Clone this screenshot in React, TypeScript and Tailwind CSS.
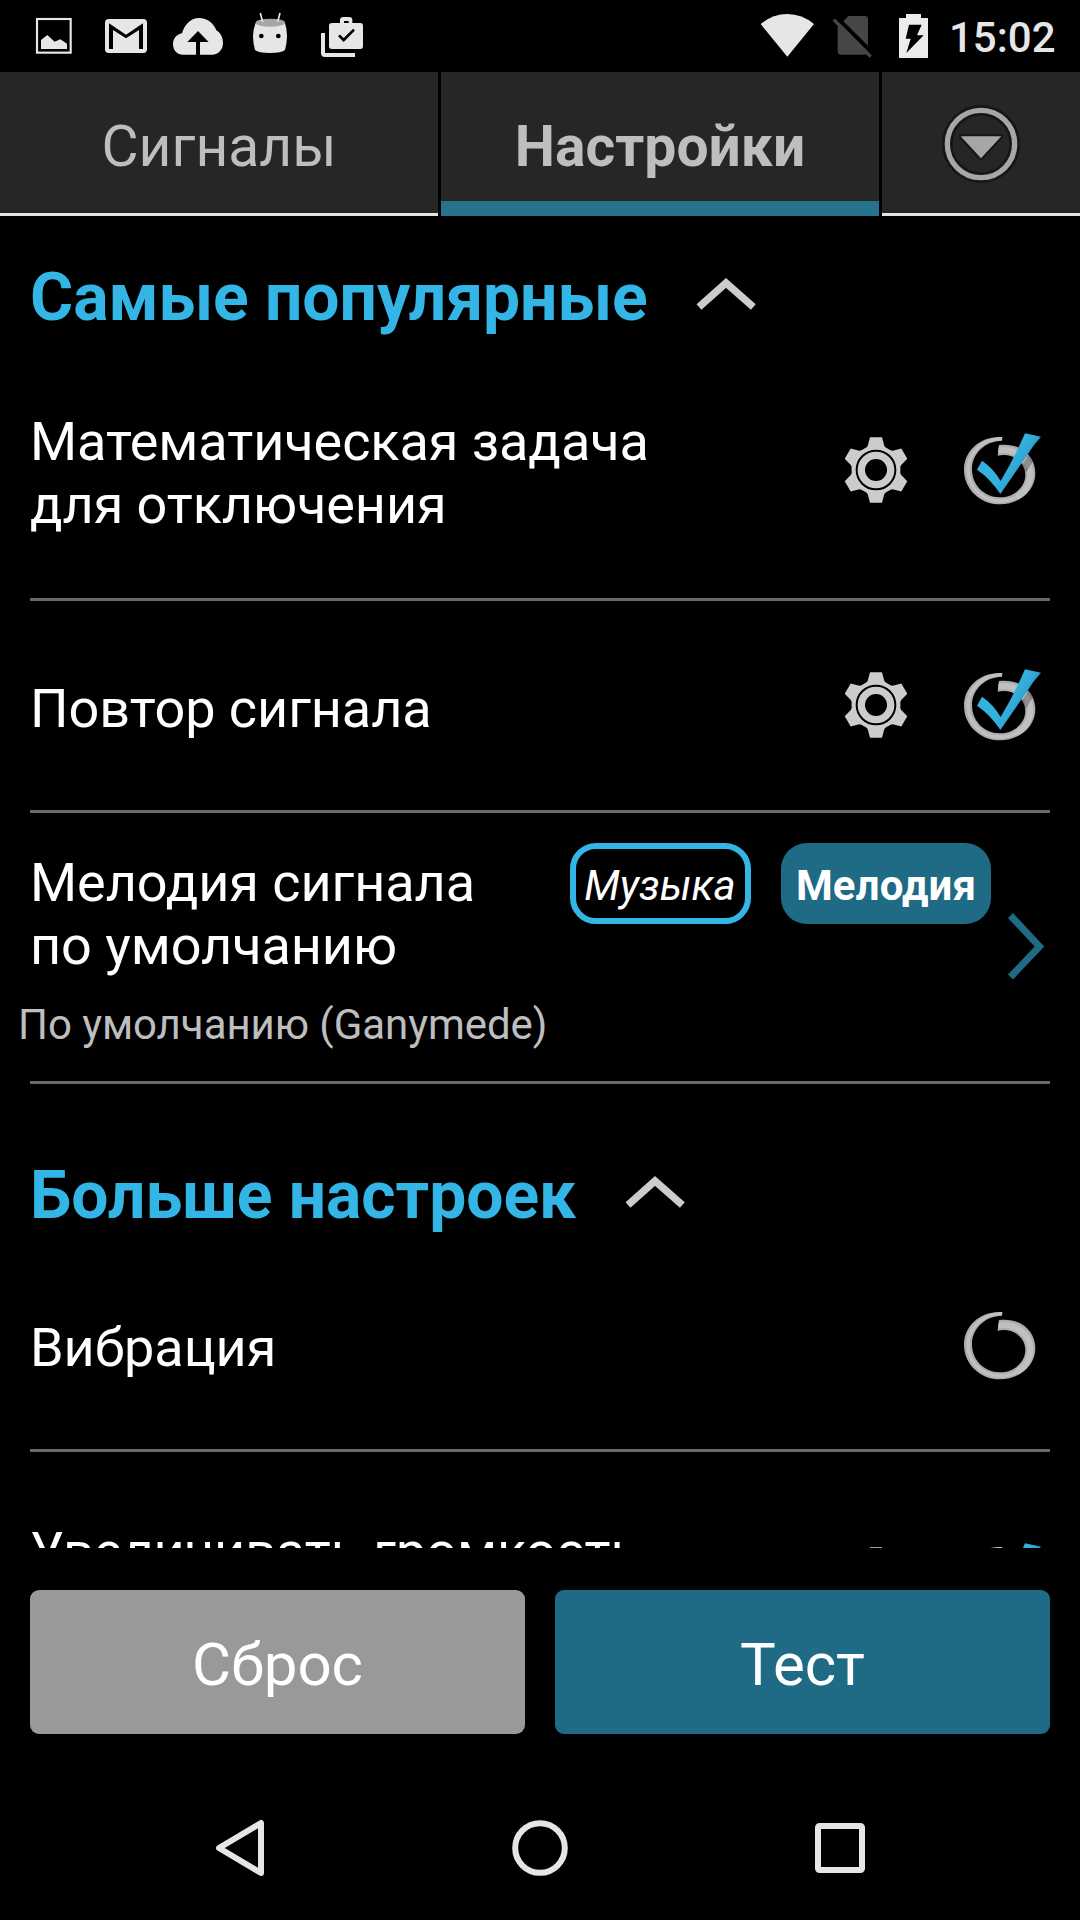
import type { ReactNode } from 'react'

function StatusBar() {
  return (
    <div className="flex h-[72px] shrink-0 items-start pl-[18px] text-[#e6e6e6]">
      {/* Screenshot */}
      <svg className="h-[72px] w-[72px]" viewBox="54 0 216 216" fill="currentColor">
        <rect x="111" y="57" width="101" height="101" fill="none" stroke="currentColor" strokeWidth="6.5" />
        <path d="M123 147V120L142 105L164 125L181 118L201 131V147Z" />
      </svg>
      {/* Mail */}
      <svg className="h-[72px] w-[72px]" viewBox="270 0 216 216">
        <rect x="315" y="57" width="126" height="102" rx="11" fill="currentColor" />
        <path d="M327 147V70L378 104L429 70V147H417V90L378 115L339 90V147Z" fill="#000" />
      </svg>
      {/* Cloud upload */}
      <svg className="h-[72px] w-[72px]" viewBox="486 0 216 216">
        <path
          d="M546 164C531 164 519 150 519 133C519 116 529 104 546 100C554 72 573 54 597 54C622 54 641 70 649 91C662 98 669 113 669 129C669 149 655 164 637 164Z"
          fill="currentColor"
        />
        <path d="M594 93L626 126H600V166H588V126H562Z" fill="#000" />
      </svg>
      {/* Android head */}
      <svg className="h-[72px] w-[72px]" viewBox="702 0 216 216">
        <path d="M767 69Q810 50 855 69Q861 88 861 108Q861 130 855 150Q845 159 810 159Q775 159 765 150Q759 130 759 108Q759 88 767 69Z" fill="currentColor" />
        <ellipse cx="811" cy="68" rx="44" ry="12" fill="#a6a6a6" />
        <path d="M781 39L788 66M840 39L833 66" stroke="currentColor" strokeWidth="5" />
        <circle cx="784" cy="108" r="7" fill="#000" />
        <circle cx="835" cy="108" r="7" fill="#000" />
      </svg>
      {/* Work profile */}
      <svg className="h-[72px] w-[72px]" viewBox="918 0 216 216">
        <path d="M969 99V159Q969 165 975 165H1065" fill="none" stroke="currentColor" strokeWidth="12" />
        <path
          d="M996 69H1020V61Q1020 51 1030 51H1048Q1057 51 1057 61V69H1081Q1089 69 1089 77V139Q1089 147 1081 147H996Q987 147 987 139V77Q987 69 996 69ZM1032 63V69H1046V63Z"
          fill="currentColor"
          fillRule="evenodd"
        />
        <path d="M1017 106L1031 120L1062 89" fill="none" stroke="#000" strokeWidth="8" />
      </svg>

      <div className="ml-auto flex items-start">
        <svg className="h-[72px] w-[72px]" viewBox="96 0 216 216">
          <path d="M122 72Q158 42 202 42Q246 42 282 72L202 170Z" fill="currentColor" />
        </svg>
        <svg className="h-[72px] w-[60px]" viewBox="312 0 180 216">
          <path d="M385 48H434Q444 48 444 58V153Q444 164 434 164H364Q353 164 353 153V80Z" fill="#464646" />
          <path d="M350 52L466 168" stroke="#000" strokeWidth="12" />
          <path d="M341 59L452 170" stroke="#464646" strokeWidth="10" />
        </svg>
        <svg className="h-[72px] w-[60px]" viewBox="492 0 180 216">
          <path d="M558 42H603V54H624V174H537V54H558Z" fill="#ececec" />
          <path d="M567 74H605L591 106H611L559 159L572 116H557Z" fill="#000" />
        </svg>
        <span className="w-[136px] pl-[5px] text-[42px] leading-[75px] font-medium">15:02</span>
      </div>
    </div>
  )
}

function Tabs() {
  return (
    <div className="flex h-[144px] shrink-0 gap-[3px] text-[57px] text-[#bebebe]">
      <div className="flex w-[438px] items-center justify-center border-b-[3px] border-[#e3e3e3] bg-[#262626] pt-[8px]">
        Сигналы
      </div>
      <div className="flex w-[438px] items-center justify-center border-b-[15px] border-[#27728c] bg-[#262626] pt-[20px] font-bold">
        Настройки
      </div>
      <div className="flex flex-1 items-center justify-center border-b-[3px] border-[#e3e3e3] bg-[#262626] pt-[3px]">
        <svg className="h-[84px] w-[84px]" viewBox="-126 -126 252 252">
          <circle r="101" fill="none" stroke="#161616" strokeWidth="32" />
          <circle r="101" fill="none" stroke="#a6a6a6" strokeWidth="16" />
          <path d="M-61 -23H61L0 43Z" fill="#a6a6a6" stroke="#161616" strokeWidth="12" strokeLinejoin="round" paintOrder="stroke" />
        </svg>
      </div>
    </div>
  )
}

function SectionTitle({ children, tall }: { children: ReactNode; tall?: boolean }) {
  return (
    <div className={`flex items-end gap-[48.5px] pl-[30px] text-[#33b5e5] ${tall ? 'h-[156px]' : 'h-[126px]'}`}>
      <h2 className="pb-[6px] text-[66px] leading-[77px] font-bold tracking-[-0.05px]">{children}</h2>
      <svg className="mb-[30px] h-[36px] w-[60px]" viewBox="888 648 180 108">
        <path d="M897 741L978 669L1060 741" fill="none" stroke="#cccccc" strokeWidth="22" />
      </svg>
    </div>
  )
}

const toothAngles = [0, 60, 120, 180, 240, 300]

function GearIcon() {
  return (
    <svg className="h-[68px] w-[64px]" viewBox="-96 -102 192 204">
      <g fill="#cccccc">
        <circle r="72" />
        {toothAngles.map((angle) => (
          <path key={angle} d="M-18 -98H18L25 -72Q29 -65 42 -60H-42Q-29 -65 -25 -72Z" transform={`rotate(${angle})`} />
        ))}
      </g>
      <circle r="58" fill="none" stroke="#000" strokeWidth="6" />
      <circle r="33" fill="#000" />
    </svg>
  )
}

const ringPath =
  'M247 66C180 62 132 108 132 164C132 222 180 268 240 268C300 268 346 226 346 175C346 125 305 82 237 90L233 122C280 112 316 142 316 180C316 218 280 247 240 247C190 247 156 208 156 163C156 115 195 78 246 77Z'

function Toggle({ checked }: { checked?: boolean }) {
  return (
    <svg className="mb-[2px] h-[80px] w-[88px]" viewBox="120 42 264 240">
      <defs>
        <clipPath id="ring-clip">
          <path d={ringPath} />
        </clipPath>
        <linearGradient id="tick" x1="0.55" y1="0.4" x2="0.75" y2="0.52">
          <stop offset="0" stopColor="#33b1df" />
          <stop offset="0.6" stopColor="#33a8d5" />
          <stop offset="1" stopColor="#2791bb" />
        </linearGradient>
      </defs>
      <path d={ringPath} fill="#adadad" />
      {/* Bevel highlight, wider where the ring gets thicker */}
      <g clipPath="url(#ring-clip)" fill="none" stroke="#c0c0c0">
        <path d="M247 71C190 70 144 112 144 164C144 215 185 258 240 258C292 258 331 224 331 178" strokeWidth="10" />
        <path d="M290 246C316 232 331 206 331 178C331 134 292 100 234 106" strokeWidth="18" />
        {checked && (
          <path d="M346 105L310 165" stroke="#000" strokeOpacity="0.25" strokeWidth="22" />
        )}
      </g>
      {checked && (
        <path d="M315 55L363 65Q340 90 322 120L241 237Q210 190 171 164L186 137Q220 160 242 198Q285 125 315 55Z" fill="url(#tick)" />
      )}
    </svg>
  )
}

function SettingRow({ children, gear, checked, tall }: {
  children: ReactNode
  gear?: boolean
  checked?: boolean
  tall?: boolean
}) {
  return (
    <div
      className={`mx-[30px] flex shrink-0 items-center border-b-[3px] border-[#696969] pr-[2px]
        ${tall ? 'h-[259px]' : 'h-[212px]'}`}
    >
      <div className="flex-1 pt-[6px] text-[54px] leading-[63.3px] tracking-[-0.06px]">{children}</div>
      {gear && (
        <div className="mr-[52px] mb-px">
          <GearIcon />
        </div>
      )}
      <Toggle checked={checked} />
    </div>
  )
}

function MelodyRow() {
  return (
    <div className="mx-[30px] flex h-[271px] shrink-0 border-b-[3px] border-[#696969]">
      <div className="w-[540px] pt-[38px] tracking-[-0.06px]">
        <div className="text-[54px] leading-[63.3px]">
          Мелодия сигнала
          <br />
          по умолчанию
        </div>
        <div className="-ml-[12px] pt-[22px] text-[42px] leading-[49px] whitespace-nowrap text-[#bebebe]">
          По умолчанию (Ganymede)
        </div>
      </div>
      <div className="mt-[30px] flex h-[81px] gap-[30px] text-[42px]">
        <button className="w-[181px] rounded-[26px] border-[6px] border-[#33b5e5] pt-[3px] pr-[1px] italic">Музыка</button>
        <button className="w-[210px] rounded-[26px] bg-[#1f6b85] pt-[3px] font-bold tracking-[0.15px]">Мелодия</button>
      </div>
      <svg className="mt-[98px] ml-[15px] h-[70px] w-[42px]" viewBox="0 0 42 70">
        <path d="M4.5 4.5L33.5 35.5L4.5 66" fill="none" stroke="#1f6b85" strokeWidth="7" />
      </svg>
    </div>
  )
}

function NavBar() {
  return (
    <div className="flex h-[144px] shrink-0 items-center justify-center gap-[240px]">
      <svg className="h-[60px] w-[60px]" viewBox="-30 -30 60 60" fill="none" stroke="#e6e6e6" strokeWidth="6">
        <path d="M-21 0L21 -25V25Z" strokeLinejoin="round" />
      </svg>
      <svg className="h-[60px] w-[60px]" viewBox="-30 -30 60 60" fill="none" stroke="#e6e6e6" strokeWidth="6">
        <circle r="24.8" />
      </svg>
      <svg className="h-[60px] w-[60px]" viewBox="-30 -30 60 60" fill="none" stroke="#e6e6e6" strokeWidth="6">
        <rect x="-22" y="-22" width="44" height="44" rx="1.5" />
      </svg>
    </div>
  )
}

export default function App() {
  return (
    <div className="flex h-[1920px] w-[1080px] flex-col overflow-hidden bg-black font-['Roboto',sans-serif] text-white">
      <StatusBar />
      <Tabs />

      <main className="h-[1332px] shrink-0 overflow-hidden">
        <SectionTitle>Самые популярные</SectionTitle>
        <SettingRow tall gear checked>
          Математическая задача
          <br />
          для отключения
        </SettingRow>
        <SettingRow gear checked>Повтор сигнала</SettingRow>
        <MelodyRow />
        <SectionTitle tall>Больше настроек</SectionTitle>
        <SettingRow>Вибрация</SettingRow>
        <SettingRow tall gear checked>
          Увеличивать громкость
          <br />
          &nbsp;
        </SettingRow>
      </main>

      <div className="flex h-[228px] shrink-0 gap-[30px] px-[30px] pt-[42px] text-[60px]">
        <button className="h-[144px] flex-1 rounded-[9px] bg-[#999999] pt-[5px]">Сброс</button>
        <button className="h-[144px] flex-1 rounded-[9px] bg-[#1f6b85] pt-[5px]">Тест</button>
      </div>

      <NavBar />
    </div>
  )
}
